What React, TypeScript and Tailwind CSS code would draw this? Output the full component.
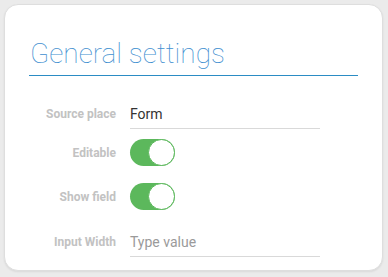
import React from "react";

function Toggle() {
  return (
    <div className="w-[45px] h-[27px] rounded-full bg-[#5cb85c] relative">
      <div className="absolute right-0 top-0 w-[27px] h-[27px] rounded-full bg-white border border-[#5cb85c]" />
    </div>
  );
}

export default function App() {
  const font = { fontFamily: "Roboto, 'Liberation Sans', sans-serif" };
  return (
    <div className="w-[388px] h-[277px] bg-[#ebebeb] p-[4px]" style={font}>
      <div className="w-[379px] h-[267px] bg-white rounded-[14px] border border-[#dedede] shadow-[0_1px_2px_rgba(0,0,0,0.08)] px-[24px] pt-[32px]">
        <div className="border-b border-[#2b8cc4] pb-[5px] pl-[1px]">
          <div className="text-[28px] leading-[33px] font-thin text-[#3f8fd0]">General settings</div>
        </div>
        <div className="mt-[23px] flex flex-col">
          <div className="flex items-center h-[30px]">
            <div className="w-[87px] text-right text-[12px] font-bold text-[#c2c2c2]">Source place</div>
            <div className="ml-[14px] w-[190px] h-[30px] border-b border-[#d9d9d9] text-[14px] text-[#333] leading-[30px] -mt-[1px]">Form</div>
          </div>
          <div className="flex items-center mt-[10px] h-[27px]">
            <div className="w-[87px] text-right text-[12px] font-bold text-[#c2c2c2]">Editable</div>
            <div className="ml-[14px]"><Toggle /></div>
          </div>
          <div className="flex items-center mt-[17px] h-[27px]">
            <div className="w-[87px] text-right text-[12px] font-bold text-[#c2c2c2]">Show field</div>
            <div className="ml-[14px]"><Toggle /></div>
          </div>
          <div className="flex items-center mt-[17px] h-[30px]">
            <div className="w-[87px] text-right text-[12px] font-bold text-[#c2c2c2]">Input Width</div>
            <div className="ml-[14px] w-[190px] h-[30px] border-b border-[#d9d9d9] text-[14px] text-[#9a9a9a] leading-[30px]">Type value</div>
          </div>
        </div>
      </div>
    </div>
  );
}
